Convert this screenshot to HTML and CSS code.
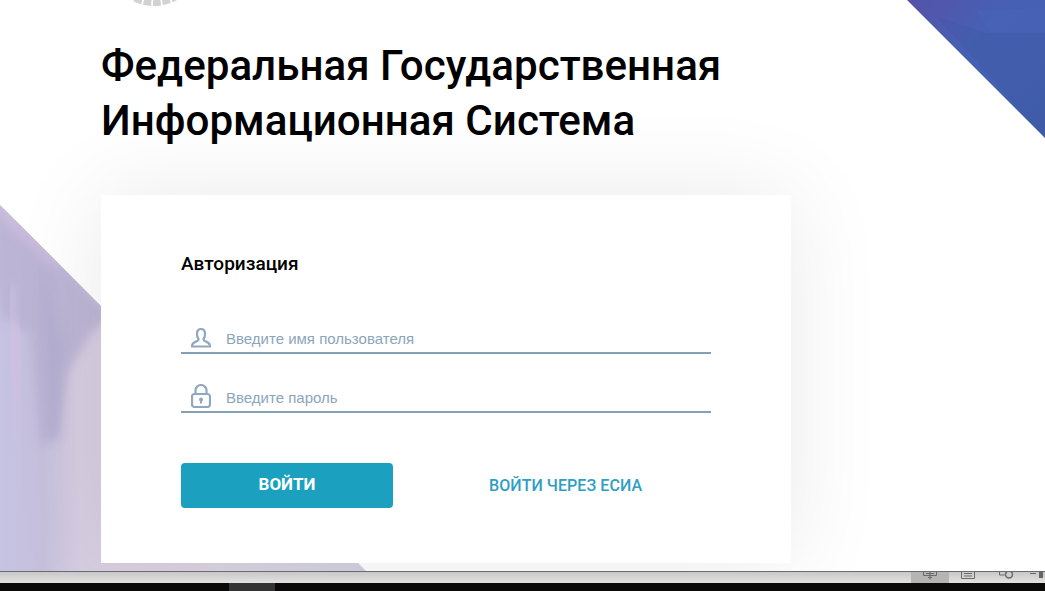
FILE: index.html
```html
<!DOCTYPE html>
<html lang="ru">
<head>
<meta charset="utf-8">
<title>Авторизация</title>
<link rel="stylesheet" href="styles.css">
</head>
<body>
<main class="page">
  <svg class="deco deco-left" viewBox="0 0 366 366" aria-hidden="true">
    <defs>
      <linearGradient id="lav" x1="0" y1="0" x2="1" y2="0">
        <stop offset="0" stop-color="#c5c2e2"/>
        <stop offset="0.12" stop-color="#c6c0dc"/>
        <stop offset="0.22" stop-color="#d8cee2"/>
        <stop offset="0.6" stop-color="#dcd5e3"/>
        <stop offset="1" stop-color="#d2d1e2"/>
      </linearGradient>
      <filter id="soft" x="-30%" y="-30%" width="160%" height="160%"><feGaussianBlur stdDeviation="5"/></filter>
      <clipPath id="tri"><polygon points="0,0 366,366 0,366"/></clipPath>
    </defs>
    <polygon points="0,0 366,366 0,366" fill="url(#lav)"/>
    <g clip-path="url(#tri)">
      <polygon points="-10,0 30,20 70,60 110,110 90,130 66,170 58,230 40,240 30,130 0,110" fill="#b9b2d3" opacity="0.85" filter="url(#soft)"/>
      <polygon points="40,60 64,140 58,230 50,240 44,150" fill="#b3aed0" opacity="0.8" filter="url(#soft)"/>
      <path d="M12 80v100M18 120v120" stroke="#cdc0e0" stroke-width="6" filter="url(#soft)"/>
      <path d="M0 5l60 55" stroke="#cbbcdb" stroke-width="12" filter="url(#soft)"/>
    </g>
  </svg>
  <svg class="deco deco-right" viewBox="0 0 138 138" aria-hidden="true">
    <defs>
      <linearGradient id="blue" x1="0" y1="0" x2="1" y2="1">
        <stop offset="0" stop-color="#5552a8"/>
        <stop offset="0.4" stop-color="#4661b4"/>
        <stop offset="1" stop-color="#3e5eac"/>
      </linearGradient>
    </defs>
    <polygon points="0,0 138,0 138,138" fill="url(#blue)"/>
    <polygon points="30,17 80,33 138,33 138,138" fill="#40579f" opacity="0.3"/>
    <polygon points="70,10 138,8 138,32 82,32" fill="#4a64b8" opacity="0.5"/>
  </svg>

  <div class="logo-wrap">
    <svg class="logo" viewBox="0 0 50 7" aria-hidden="true">
      <path d="M-1 -8A42 42 0 0 0 51 -8" fill="none" stroke="#d2d2d2" stroke-width="10" stroke-dasharray="7.400 1.600"/>
    </svg>
  </div>

  <h1 class="title">Федеральная Государственная<br>Информационная Система</h1>

  <section class="card">
    <h2 class="card-title">Авторизация</h2>
    <div class="field">
      <svg class="icon icon-user" viewBox="0 0 20 20" aria-hidden="true">
        <path d="M10 1C7.500 1 6 3 6 6c0 2 .5 3.500 1.200 4.500.6.800.4 1.500-.3 2L2.500 15C1.500 15.700 1 17 1 18.500h18c0-1.500-.5-2.800-1.500-3.500l-4.400-2.500c-.7-.5-.9-1.200-.3-2C13.500 9.500 14 8 14 6c0-3-1.500-5-4-5z" fill="none" stroke="#8fa8bd" stroke-width="2.200" stroke-linejoin="round"/>
      </svg>
      <span class="placeholder">Введите имя пользователя</span>
    </div>
    <div class="field">
      <svg class="icon icon-lock" viewBox="0 0 20 24" aria-hidden="true">
        <path d="M4.500 10V6.500a5.500 5.500 0 0 1 11 0V10" fill="none" stroke="#8fa8bd" stroke-width="2.200"/>
        <rect x="1" y="10" width="18" height="13" rx="2.500" fill="none" stroke="#8fa8bd" stroke-width="2.200"/>
        <circle cx="10" cy="15.500" r="2" fill="#8fa8bd"/>
        <rect x="9" y="15.500" width="2" height="4" fill="#8fa8bd"/>
      </svg>
      <span class="placeholder">Введите пароль</span>
    </div>
    <div class="actions">
      <button class="btn" type="button">ВОЙТИ</button>
      <a class="esia" href="#">ВОЙТИ ЧЕРЕЗ ЕСИА</a>
    </div>
  </section>
</main>
<footer class="taskbar">
  <div class="tray">
    <div class="tray-item tray-active">
      <svg viewBox="0 0 14 8" class="tray-icon"><path d="M.500 0v3.500h13V0M3 1.500h8M7 0v7.500M5 5.500h4" fill="none" stroke="#6a6a6a" stroke-width="1"/></svg>
    </div>
    <div class="tray-item">
      <svg viewBox="0 0 14 8" class="tray-icon"><path d="M.500 0v6.500h13V0M3 1.500h8M3 4h8" fill="none" stroke="#6a6a6a" stroke-width="1"/></svg>
    </div>
    <div class="tray-item">
      <svg viewBox="0 0 14 8" class="tray-icon"><path d="M.500 0v3h5" fill="none" stroke="#6a6a6a"/><circle cx="10" cy="2.500" r="3.500" fill="none" stroke="#6a6a6a" stroke-width="1.500"/></svg>
    </div>
    <div class="tray-end"><span class="dash"></span><span class="sq"></span></div>
  </div>
  <div class="blackbar"><span class="tab"></span></div>
</footer>
</body>
</html>
```

FILE: styles.css
```css
* { box-sizing: border-box; }
html, body { margin: 0; padding: 0; height: 591px; overflow: hidden; background: #fff; }
body { display: flex; flex-direction: column; font-family: Roboto, "Liberation Sans", sans-serif; color: #000; }

.page { position: relative; height: 571px; overflow: hidden; padding-left: 101px; background: #fff; flex: none; }
.deco { position: absolute; display: block; }
.deco-left { left: 0; top: 205px; width: 366px; height: 366px; }
.deco-right { right: 0; top: 0; width: 138px; height: 138px; }

.logo-wrap { position: relative; height: 7px; padding-left: 28px; }
.logo { display: block; width: 50px; height: 7px; }

.title { position: relative; margin: 31px 0 0; font-size: 42.13px; line-height: 55px; font-weight: 500; letter-spacing: 0; }

.card { position: relative; width: 690px; height: 368px; margin-top: 47px; padding: 57px 80px 0; background: #fff; box-shadow: 0 0 90px rgba(0, 0, 0, 0.085); }
.card-title { margin: 0 0 46px; font-size: 19px; line-height: 24px; font-weight: 500; }

.field { display: flex; align-items: flex-end; height: 32px; margin-bottom: 27px; padding: 0 0 3px 10px; border-bottom: 2px solid #85a0b6; }
.icon { width: 20px; flex: none; margin-right: 15px; display: block; }
.icon-user { height: 20px; margin-bottom: 1px; }
.icon-lock { height: 24px; }
.placeholder { font-family: "Liberation Sans", Arial, sans-serif; font-size: 15px; line-height: 20px; color: #8ba5ba; }

.actions { display: flex; align-items: center; margin-top: 50px; }
.btn { width: 212px; height: 45px; border: 0; border-radius: 4px; background: #1ba1bf; color: #fff; font: 700 17px/1 Roboto, sans-serif; padding: 0 0 3px; }
.esia { margin-left: 96px; font-size: 16px; font-weight: 500; letter-spacing: 0.07px; color: #2d9ec4; text-decoration: none; }

.taskbar { flex: none; height: 20px; display: flex; flex-direction: column; }
.tray { height: 12px; border-top: 1px solid #6b6b6b; background: linear-gradient(#c8c8c8, #e2e2e2); display: flex; padding-left: 911px; }
.tray-item { width: 38px; height: 11px; display: flex; justify-content: center; }
.tray-active { background: #b5b5b5; }
.tray-icon { width: 14px; height: 8px; display: block; }
.tray-end { display: flex; gap: 3px; margin-left: 5px; }
.dash { width: 6px; height: 1px; margin-top: 1px; background: #666; }
.sq { width: 4px; height: 6px; background: #666; }
.blackbar { height: 8px; background: #0b0a09; padding-left: 229px; }
.tab { display: block; width: 46px; height: 8px; background: #333; }
```
